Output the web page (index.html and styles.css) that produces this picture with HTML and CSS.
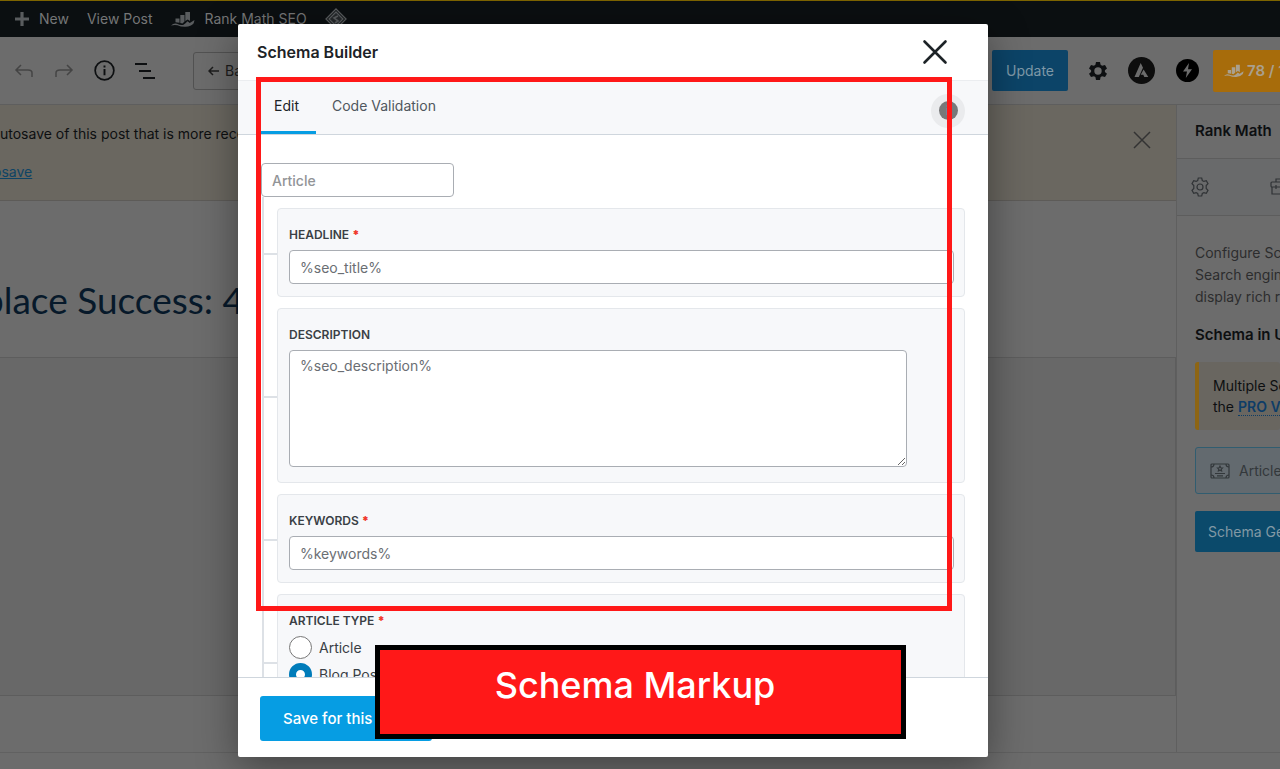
FILE: index.html
```html
<!DOCTYPE html>
<html lang="en">
<head>
<meta charset="utf-8">
<title>Schema Builder</title>
<link rel="stylesheet" href="styles.css">
</head>
<body>
<svg class="defs" width="0" height="0" aria-hidden="true">
  <symbol id="rank" viewBox="0 0 24 18">
    <path d="M4.500 8.500h4v4.300l-4-.5zM9.300 5h4.200v6.500l-2 2-2.200-.5zM14.300 2h4.700v9l-2.300-1.500-2.400 1.600z" fill="currentColor"/>
    <path d="M0 15.500q3-3 6-1.700 4 2 6.500.9 2-1.200 4-3.400l2.300 1.600L23.500 10l-.8 3.300q-2.700 3.200-8.200 3.500-4.500.2-8-1.500-3-.8-6.500.2z" fill="currentColor"/>
  </symbol>
</svg>
<div class="app">
  <nav class="adminbar" aria-label="Toolbar">
    <a href="#" class="new"><svg width="16" height="16" viewBox="0 0 16 16"><path d="M8 1v14M1 8h14" stroke="currentColor" stroke-width="3.2"/></svg>New</a>
    <a href="#">View Post</a>
    <a href="#" class="seo"><svg width="24" height="18"><use href="#rank"/></svg>Rank Math SEO</a>
    <a href="#" aria-label="Astra"><svg width="22" height="22" viewBox="0 0 22 22" fill="none" stroke="currentColor" stroke-width="1.3"><path d="M11 1l10 10-10 10L1 11z"/><path d="M11 4l7 7-7 7-7-7z" fill="currentColor" fill-opacity=".35"/><path d="M13 8l-4 2 4 3-3 2" stroke-width="1.6"/></svg></a>
  </nav>

  <header class="toolbar">
    <div class="tools">
      <button class="muted" aria-label="Undo"><svg width="20" height="16" viewBox="0 0 20 16" fill="none" stroke="currentColor" stroke-width="1.5"><path d="M7 2L2 7l5 5M2 7h12q4 0 4 3v4"/></svg></button>
      <button class="muted" aria-label="Redo"><svg width="20" height="16" viewBox="0 0 20 16" fill="none" stroke="currentColor" stroke-width="1.5"><path d="M13 2l5 5-5 5M18 7H6q-4 0-4 3v4"/></svg></button>
      <button aria-label="Details"><svg width="21" height="21" viewBox="0 0 22 22" fill="none" stroke="currentColor" stroke-width="1.8"><circle cx="11" cy="11" r="9.8"/><path d="M11 9.5V16M11 5.7v2.2" stroke-width="2"/></svg></button>
      <button aria-label="List view"><svg width="22" height="18" viewBox="0 0 22 18" stroke="currentColor" stroke-width="1.8"><path d="M0 2h12M4 9h12M8 16h12"/></svg></button>
      <button class="back"><svg width="12" height="10" viewBox="0 0 12 10" fill="none" stroke="currentColor" stroke-width="1.5"><path d="M5 1L1 5l4 4M1 5h10"/></svg>Back to WordPress</button>
    </div>
    <div class="actions">
      <button class="update">Update</button>
      <button aria-label="Settings"><svg width="18" height="20" viewBox="0 0 18 20"><path d="M7 1h4l.6 2.8 1.5.9L16 4l2 3.400-2.100 1.900v1.600L18 12.800 16 16l-2.900-.8-1.500.9L11 19H7l-.6-2.900-1.500-.9L2 16 0 12.800l2.100-1.900V9.300L0 7.400 2 4l2.900.7 1.500-.9zM9 6.300a3.700 3.700 0 1 0 0 7.400 3.700 3.700 0 0 0 0-7.400z" fill="currentColor" fill-rule="evenodd"/></svg></button>
      <button aria-label="Astra settings"><svg width="27" height="27" viewBox="0 0 27 27"><circle cx="13.500" cy="13.500" r="13.500" fill="#0d0d0d"/><path d="M12.700 6l2.300 4.700L10.800 20H6.500zM15.600 12.500L20.300 20h-4l-1-2.300h-2.600z" fill="#6c6c6c"/></svg></button>
      <button aria-label="Performance"><svg width="23" height="23" viewBox="0 0 23 23"><circle cx="11.500" cy="11.500" r="11.500" fill="#000"/><path d="M13 4l-6 8.500h4L9.800 19l6.200-8.800h-4z" fill="#6c6c6c"/></svg></button>
      <button class="score"><svg width="20" height="15"><use href="#rank"/></svg>78 / 100</button>
    </div>
  </header>

  <div class="workspace">
    <main class="editor">
      <section class="notice">
        <div><p>utosave of this post that is more recent</p><a href="#">osave</a></div>
        <button aria-label="Dismiss"><svg width="18" height="18" viewBox="0 0 18 18" stroke="currentColor" stroke-width="1.500"><path d="M1 1l16 16M17 1L1 17"/></svg></button>
      </section>
      <div class="post-title"><h1>place Success: 4</h1></div>
      <div class="canvas"></div>
      <div class="meta"></div>
    </main>
    <aside class="sidebar">
      <h2>Rank Math</h2>
      <div class="side-tabs">
        <button aria-label="General"><svg width="20" height="20" viewBox="0 0 20 20" fill="none" stroke="currentColor" stroke-width="1.200"><path d="M8.300 1h3.400l.6 2.500 1.600.9L16.300 3.700 18 6.700 16.200 8.500v3L18 13.300l-1.700 3-2.400-.7-1.600.9-.6 2.500H8.300l-.6-2.500-1.600-.9-2.400.7-1.700-3L3.800 11.500v-3L2 6.700l1.700-3 2.400.7 1.600-.9z"/><circle cx="10" cy="10" r="3"/></svg></button>
        <button aria-label="Advanced"><svg width="20" height="18" viewBox="0 0 20 18" fill="none" stroke="currentColor" stroke-width="1.200"><rect x="1" y="4" width="18" height="5" rx="1"/><path d="M2 9v7h16V9M6 4V1h8v3M6 7v4"/></svg></button>
      </div>
      <div class="side-body">
        <p class="intro">Configure Schema<br>Search engines<br>display rich results</p>
        <h3>Schema in Use</h3>
        <p class="tip">Multiple Schemas<br>the <a href="#">PRO Version</a></p>
        <button class="schema-item"><svg width="20" height="16" viewBox="0 0 20 16" fill="none" stroke="currentColor" stroke-width="1.200"><rect x="1" y="1" width="18" height="14" rx="1"/><path d="M1 4q3 0 3-3M19 4q-3 0-3-3M1 12q3 0 3 3M19 12q-3 0-3 3M10 3.200l.8 1.600 1.700.2-1.200 1.200.3 1.700-1.600-.8-1.600.8.3-1.700L7.500 5l1.700-.2zM5 10.500h10M7 12.800h6"/></svg>Article</button>
        <button class="generator">Schema Generator</button>
      </div>
    </aside>
  </div>
  <footer class="crumbs"></footer>
</div>

<div class="backdrop">
  <section class="modal" role="dialog" aria-labelledby="modal-title">
    <header class="modal-head">
      <h2 id="modal-title">Schema Builder</h2>
      <button aria-label="Close"><svg width="26" height="26" viewBox="0 0 26 26" stroke="currentColor" stroke-width="2.600" stroke-linecap="round"><path d="M2.500 2.500l21 21M23.500 2.500l-21 21"/></svg></button>
    </header>
    <div class="tabs">
      <button class="active">Edit</button>
      <button>Code Validation</button>
      <button class="info" aria-label="Information"><span>i</span></button>
    </div>
    <form class="modal-body" id="schema-form">
      <input class="type" type="text" placeholder="Article" aria-label="Schema type">
      <div class="tree">
        <div class="card">
          <label for="headline">HEADLINE <b>*</b></label>
          <input id="headline" type="text" value="%seo_title%">
        </div>
        <div class="card">
          <label for="description">DESCRIPTION</label>
          <textarea id="description">%seo_description%</textarea>
        </div>
        <div class="card">
          <label for="keywords">KEYWORDS <b>*</b></label>
          <input id="keywords" type="text" value="%keywords%">
        </div>
        <fieldset class="card">
          <div class="caption">ARTICLE TYPE <b>*</b></div>
          <label class="option"><input type="radio" name="kind">Article</label>
          <label class="option"><input type="radio" name="kind" checked>Blog Post</label>
          <label class="option"><input type="radio" name="kind">News Article</label>
        </fieldset>
      </div>
    </form>
    <footer class="modal-foot"><button form="schema-form" type="button">Save for this Post</button></footer>
  </section>
</div>
<div class="highlight"></div>
<div class="banner">Schema Markup</div>
</body>
</html>
```
FILE: styles.css
```css
* { box-sizing: border-box; }
body {
  margin: 0;
  height: 100vh;
  overflow: hidden;
  position: relative;
  font: 14px/20px Inter, "Liberation Sans", sans-serif;
  color: #0d0f11;
}
button { font: inherit; color: inherit; background: none; border: 0; padding: 0; margin: 0; display: flex; align-items: center; white-space: nowrap; }
h1, h2, h3, p { margin: 0; }
svg { flex: none; }
.defs { position: absolute; }

.app { height: 100%; display: flex; flex-direction: column; background: #6c6c6c; }
.adminbar { display: flex; align-items: center; height: 37px; padding-left: 14px; background: #0b0f11; border-top: 1px solid #7d6400; gap: 18px; }
.adminbar a { display: flex; align-items: center; color: #757677; text-decoration: none; white-space: nowrap; }
.adminbar .new { gap: 9px; }
.adminbar .seo { gap: 10px; }
.adminbar svg { color: #595c5e; }

.toolbar { display: flex; justify-content: space-between; height: 68px; border-bottom: 1px solid #5e5e5e; }
.tools { display: flex; align-items: center; padding-left: 14px; gap: 20px; }
.tools .muted { color: #444; }
.tools .back { height: 38px; padding: 0 14px; gap: 5px; margin-left: 16px; border: 1px solid #525252; border-radius: 3px; color: #1c1c1c; }
.actions { display: flex; align-items: center; width: 288px; overflow: hidden; gap: 21px; }
.update { height: 41px; padding: 0 14px; background: #0c4468; color: #7e98a7; border-radius: 2px; }
.score { height: 42px; padding: 0 11px; gap: 3px; margin-left: -7px; background: #a76c0b; color: #aaa08e; border-radius: 2px; font-size: 15px; font-weight: 600; }

.workspace { flex: 1; display: flex; min-height: 0; }
.editor { flex: 1; display: flex; flex-direction: column; min-width: 0; }
.notice { display: flex; justify-content: space-between; height: 96px; padding: 19px 25px 0 0; background: #6a6760; border-bottom: 1px solid #5d5b58; }
.notice p { margin-bottom: 18px; }
.notice a { margin-left: -7px; color: #0e4465; }
.notice button { align-self: flex-start; margin-top: 7px; color: #333; }
.post-title { height: 156px; padding-top: 75px; }
.post-title h1 { margin-left: -17px; font: 400 37px/48px Lato, sans-serif; color: #07192a; white-space: nowrap; }
.canvas { flex: 1; background: #686868; border: 1px solid #5d5d5d; border-left: 0; }
.meta { height: 56px; }
.crumbs { height: 17px; border-top: 1px solid #616161; }

.sidebar { width: 104px; overflow: hidden; border-left: 1px solid #5f5f5f; white-space: nowrap; }
.sidebar h2 { padding: 16px 18px; height: 53px; font-size: 15px; line-height: 20px; font-weight: 600; }
.side-tabs { display: flex; align-items: center; height: 58px; padding-left: 13px; gap: 60px; background: #696a6b; border: 1px solid #5d5d5d; border-width: 1px 0; color: #303336; }
.side-body { padding: 26px 0 0 18px; }
.intro { line-height: 22px; color: #2c2d2e; }
.sidebar h3 { margin: 17px 0; font-size: 15px; line-height: 20px; font-weight: 600; }
.tip { height: 68px; padding: 13px 0 0 14px; margin-bottom: 17px; border-left: 4px solid #8d6514; border-radius: 3px; background: #696660; line-height: 21px; }
.tip a { color: #0e3d67; font-weight: 600; text-decoration: none; border-bottom: 1px dotted #0e3d67; }
.schema-item { width: 200px; height: 47px; padding-left: 14px; gap: 9px; margin-bottom: 17px; border: 1px solid #315d70; border-radius: 3px; background: #636a6f; color: #33383b; }
.generator { width: 200px; height: 41px; padding-left: 13px; background: #0b4a6b; color: #8299a5; border-radius: 2px; }

.backdrop { position: absolute; inset: 0; padding: 24px 292px 12px 238px; display: flex; }
.modal { flex: 1; display: flex; flex-direction: column; min-width: 0; background: #fff; color: #1d2327; border-radius: 2px; box-shadow: 0 10px 40px rgba(0, 0, 0, .4); }
.modal-head { display: flex; justify-content: space-between; align-items: center; height: 56px; padding: 0 40px 0 19px; }
.modal-head h2 { font-size: 16px; line-height: 20px; font-weight: 600; }
.tabs { display: flex; gap: 3px; height: 55px; padding-left: 23px; background: #f7f8fa; border-top: 1px solid #ebedf0; border-bottom: 1px solid #cfd6dd; color: #50575e; }
.tabs button { padding: 0 14px 0 13px; border-bottom: 3px solid transparent; }
.tabs button.active { padding-right: 17px; border-color: #069de3; color: #1d2327; }
.tabs .info { align-self: center; justify-content: center; width: 34px; height: 34px; padding: 0; margin: 6px 23px 0 auto; border: 0; border-radius: 50%; background: #eaebed; }
.info span { width: 19px; height: 19px; border-radius: 50%; background: #777879; color: #ccc; font-size: 12px; line-height: 19px; font-weight: 700; }
.modal-body { flex: 1; min-height: 0; overflow: hidden; padding: 28px 23px 0; }
input[type="text"], textarea { display: block; width: 100%; height: 34px; margin: 0; padding: 0 10px; font: inherit; color: #6a6e73; background: #fff; border: 1px solid #a9adb3; border-radius: 4px; }
.modal-body .type { width: 193px; }
.type::placeholder { color: #929497; opacity: 1; font-weight: 500; }
.tree { display: grid; gap: 11px; margin-left: 1px; padding: 11px 0 0 13px; border-left: 2px solid #dde1e6; }
.card { position: relative; min-width: 0; margin: 0; padding: 17px 10px 12px 11px; border: 1px solid #e4e7eb; border-radius: 4px; background: #f7f8fa; }
.card::before { content: ""; position: absolute; left: -14px; top: 50%; width: 13px; height: 2px; background: #dde1e6; }
.card > label:not(.option), .caption { display: block; margin-bottom: 6px; font-size: 12px; line-height: 18px; font-weight: 600; color: #3a3f45; }
.card b { color: #f0392b; }
.card textarea { width: 93%; height: 117px; padding: 5px 10px; margin-bottom: 3px; resize: both; }
.option { display: flex; align-items: center; gap: 7px; height: 23px; margin-bottom: 4px; color: #3a3f45; }
.option input { appearance: none; width: 23px; height: 23px; margin: 0; border: 1px solid #777; border-radius: 50%; background: #fff; }
.option input:checked { border: 7px solid #007cba; }
.modal-foot { height: 80px; padding: 18px 22px; border-top: 1px solid #cfd6dd; }
.modal-foot button { height: 45px; padding: 0 24px 0 23px; background: #069de3; color: #fff; border-radius: 3px; font-size: 15px; font-weight: 500; }

.highlight { position: absolute; left: 256px; top: 77px; width: 696px; height: 534px; border: 5px solid #ff1818; pointer-events: none; }
.banner { position: absolute; left: 375px; top: 645px; width: 531px; height: 94px; padding-right: 11px; border: 5px solid #000; background: #ff1818; color: #fff; text-align: center; font: 500 36px/70px Inter, sans-serif; }
```
